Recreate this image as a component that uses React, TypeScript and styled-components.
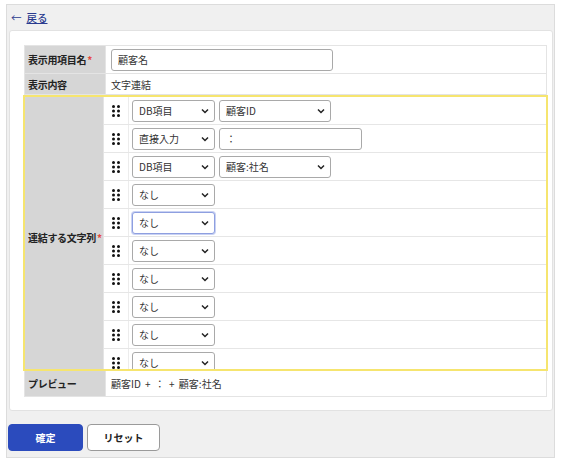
import styled, { createGlobalStyle } from 'styled-components';

const GlobalStyle = createGlobalStyle`
  html, body {
    margin: 0;
    padding: 0;
    background: #fff;
  }
  body {
    font-family: 'Noto Sans CJK JP', 'Noto Sans', sans-serif;
    font-size: 10px;
    color: #333;
  }
`;

const Page = styled.div`
  padding: 4px 0 0 6px;
`;

const Frame = styled.div`
  width: 547px;
  height: 452px;
  border: 1px solid #dcdcdc;
  background: #f0f0f0;
  display: flex;
  flex-direction: column;
`;

const Header = styled.div`
  height: 25px;
  display: flex;
  align-items: center;
  gap: 5px;
  padding-left: 4px;
  color: #2a3b8f;
  font-size: 10.5px;
  a {
    color: #2a3b8f;
    text-decoration: underline;
    font-weight: 500;
  }
`;

const Card = styled.div`
  margin: 0 1px 0 2px;
  background: #fff;
  border: 1px solid #e2e2e2;
  border-radius: 3px;
  height: 381px;
  box-sizing: border-box;
  padding: 14px 5px 0 14px;
`;

const Table = styled.div`
  border-top: 1px solid #e4e4e4;
  display: flex;
  flex-direction: column;
`;

const Row = styled.div<{ $h: number }>`
  display: grid;
  grid-template-columns: 81px 1fr;
  height: ${(p) => p.$h}px;
  box-sizing: border-box;
  border: 1px solid #e4e4e4;
  border-top: none;
`;

const Label = styled.div`
  background: #d6d6d6;
  font-weight: 700;
  color: #222;
  display: flex;
  align-items: center;
  padding-left: 3px;
  white-space: nowrap;
  letter-spacing: -0.3px;
  border-right: 1px solid #e4e4e4;
  span {
    color: #e5483e;
    margin-left: 1px;
  }
`;

const Value = styled.div<{ $spaced?: boolean }>`
  display: flex;
  align-items: center;
  padding-left: 5px;
  color: #333;
  white-space: pre;
  word-spacing: ${(p) => (p.$spaced ? '2px' : 'normal')};
`;

const Group = styled.div`
  display: grid;
  grid-template-columns: 79px 1fr;
  height: 276px;
  box-sizing: border-box;
  margin: 0 -1px;
  border: 2px solid #f6e56f;
  overflow: hidden;
`;

const List = styled.div`
  display: flex;
  flex-direction: column;
`;

const Item = styled.div`
  flex: none;
  height: 28px;
  box-sizing: border-box;
  display: grid;
  grid-template-columns: 25px 1fr;
  border-bottom: 1px solid #e6e6e6;
`;

const Handle = styled.div`
  display: flex;
  align-items: center;
  justify-content: center;
  border-right: 1px solid #ececec;
`;

const Fields = styled.div`
  display: flex;
  align-items: center;
  gap: 4px;
  padding-left: 3px;
`;

const SelectBox = styled.div<{ $w: number; $focus?: boolean }>`
  position: relative;
  width: ${(p) => p.$w}px;
  height: 22px;
  select {
    appearance: none;
    width: 100%;
    height: 100%;
    box-sizing: border-box;
    border: 1px solid ${(p) => (p.$focus ? '#8e9fe0' : '#a9a9a9')};
    box-shadow: ${(p) => (p.$focus ? '0 0 0 1px #c9d2f3' : 'none')};
    border-radius: 3px;
    background: #fff;
    padding: 0 0 0 6px;
    font-family: inherit;
    font-size: 10px;
    color: #333;
    outline: none;
  }
  svg {
    position: absolute;
    right: 6px;
    top: 8px;
    pointer-events: none;
  }
`;

const TextInput = styled.input<{ $w: number }>`
  width: ${(p) => p.$w}px;
  height: 22px;
  box-sizing: border-box;
  border: 1px solid #a9a9a9;
  border-radius: 3px;
  padding: 0 0 0 6px;
  font-family: inherit;
  font-size: 10px;
  color: #333;
  outline: none;
`;

const Footer = styled.div`
  flex: 1;
  display: flex;
  gap: 4px;
  padding: 13px 0 0 1px;
`;

const Button = styled.button<{ $primary?: boolean }>`
  height: 27px;
  width: ${(p) => (p.$primary ? 75 : 73)}px;
  border-radius: 4px;
  border: 1px solid ${(p) => (p.$primary ? '#2b4bbd' : '#9a9a9a')};
  background: ${(p) => (p.$primary ? '#2b4bbd' : '#fff')};
  color: ${(p) => (p.$primary ? '#fff' : '#222')};
  font-family: inherit;
  font-size: 10px;
  font-weight: 700;
`;

const Chevron = () => (
  <svg width='8' height='6' viewBox='0 0 8 6'>
    <path d='M1 1.5 L4 4.5 L7 1.5' fill='none' stroke='#222' strokeWidth='1.5' />
  </svg>
);

const Dots = () => (
  <svg width='8' height='12' viewBox='0 0 8 12'>
    {[1.5, 6, 10.5].map((y) =>
      [1.5, 6.5].map((x) => <circle key={`${x}-${y}`} cx={x} cy={y} r='1.5' fill='#111' />)
    )}
  </svg>
);

type Part = {
  kind: string;
  field?: string;
  text?: string;
  focus?: boolean;
};

const parts: Part[] = [
  { kind: 'DB項目', field: '顧客ID' },
  { kind: '直接入力', text: '：' },
  { kind: 'DB項目', field: '顧客:社名' },
  { kind: 'なし' },
  { kind: 'なし', focus: true },
  { kind: 'なし' },
  { kind: 'なし' },
  { kind: 'なし' },
  { kind: 'なし' },
  { kind: 'なし' },
];

const Select = ({ value, width, focus }: { value: string; width: number; focus?: boolean }) => (
  <SelectBox $w={width} $focus={focus}>
    <select defaultValue={value}>
      <option>{value}</option>
    </select>
    <Chevron />
  </SelectBox>
);

const App = () => {
  return (
    <Page>
      <GlobalStyle />
      <Frame>
        <Header>
          <span>←</span>
          <a>戻る</a>
        </Header>
        <Card>
          <Table>
            <Row $h={28}>
              <Label>
                表示用項目名<span>*</span>
              </Label>
              <Value>
                <TextInput $w={222} defaultValue='顧客名' />
              </Value>
            </Row>
            <Row $h={21}>
              <Label>表示内容</Label>
              <Value>文字連結</Value>
            </Row>
            <Group>
              <Label>
                連結する文字列<span>*</span>
              </Label>
              <List>
                {parts.map((p, i) => (
                  <Item key={i}>
                    <Handle>
                      <Dots />
                    </Handle>
                    <Fields>
                      <Select value={p.kind} width={83} focus={p.focus} />
                      {p.field && <Select value={p.field} width={112} />}
                      {p.text && <TextInput $w={143} defaultValue={p.text} />}
                    </Fields>
                  </Item>
                ))}
              </List>
            </Group>
            <Row $h={26}>
              <Label>プレビュー</Label>
              <Value $spaced>顧客ID + ： + 顧客:社名</Value>
            </Row>
          </Table>
        </Card>
        <Footer>
          <Button $primary>確定</Button>
          <Button>リセット</Button>
        </Footer>
      </Frame>
    </Page>
  );
};

export default App;
